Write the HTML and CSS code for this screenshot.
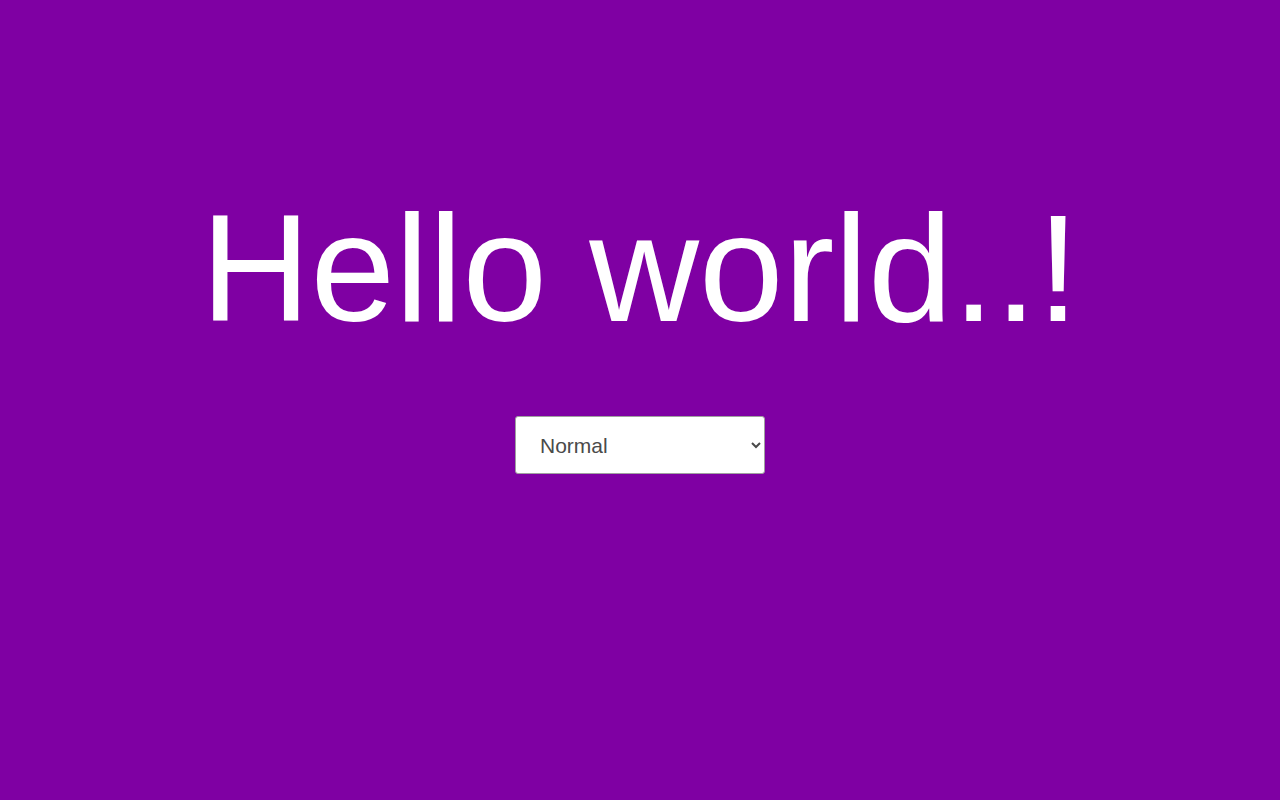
FILE: index.html
```html
<!DOCTYPE html>
<html>
<head>
<meta charset="utf-8">
<link rel="stylesheet" href="styles.css">
</head>
<body>
<main class="page">
  <h1 class="title">Hello world..!</h1>
  <select class="mode">
    <option>Normal</option>
    <option>Dark</option>
  </select>
</main>
</body>
</html>
```
FILE: styles.css
```css
html, body {
  margin: 0;
  padding: 0;
  height: 100%;
}
body {
  background: #7f00a3;
  font-family: "Liberation Sans", Arial, sans-serif;
}
.page {
  display: flex;
  flex-direction: column;
  align-items: center;
  padding-top: 192px;
}
.title {
  margin: 0;
  font-size: 152px;
  font-weight: normal;
  line-height: 1;
  color: #ffffff;
}
.mode {
  margin-top: 72px;
  width: 250px;
  height: 58px;
  padding: 0 8px 0 20px;
  font-family: "Liberation Sans", Arial, sans-serif;
  font-size: 21px;
  color: #4a4a4a;
  background-color: #ffffff;
  border: 1px solid #a0a0a0;
  border-radius: 3px;
}
```
